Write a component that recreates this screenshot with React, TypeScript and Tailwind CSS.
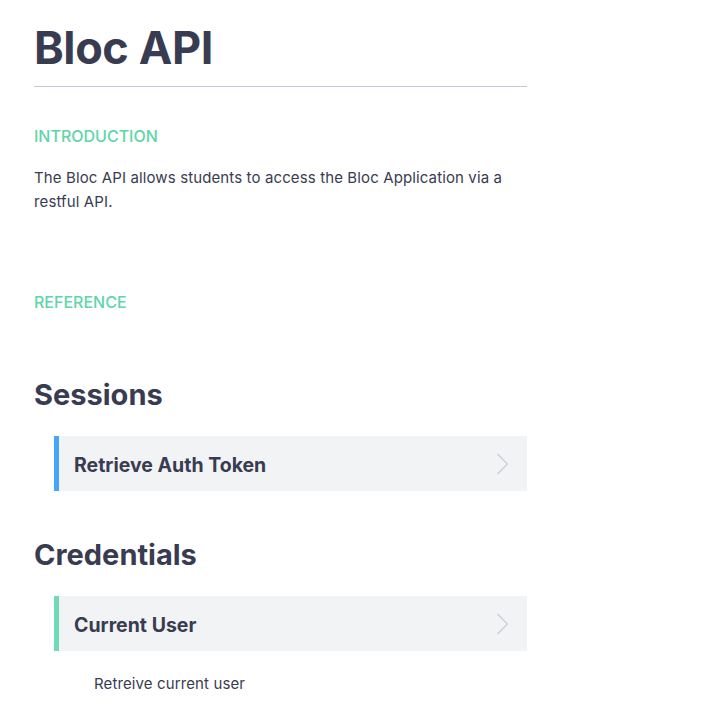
import { ReactNode } from "react";

const Chevron = () => (
  <svg width="12" height="22" viewBox="0 0 12 22" fill="none" className="shrink-0">
    <path d="M1.5 1l10 10-10 10" stroke="#c9cad6" strokeWidth="1.2" />
  </svg>
);

function Endpoint({
  title,
  accent,
  children,
}: {
  title: string;
  accent: string;
  children?: ReactNode;
}) {
  return (
    <div className="ml-5">
      <div
        className={`flex h-[55px] items-center justify-between border-l-[5px] ${accent} bg-[#f2f3f5] pl-[15px] pr-[19px]`}
      >
        <span className="pt-[5px] text-[19.5px] font-bold text-[#393c51]">{title}</span>
        <Chevron />
      </div>
      {children}
    </div>
  );
}

export default function App() {
  return (
    <div
      className="min-h-screen bg-white text-[#393c51]"
      style={{ fontFamily: "Inter, 'Noto Sans', sans-serif" }}
    >
      <main className="ml-[34px] w-[493px] pt-[22px]">
        {/* Header */}
        <h1 className="text-[45px] font-bold leading-[52px] tracking-[-0.4px]">Bloc API</h1>
        <hr className="mt-[12px] border-t border-[#c5c6d8]" />

        {/* Introduction */}
        <h4 className="mt-[39px] text-[16px] font-medium uppercase leading-5 text-[#5ed6a8]">
          Introduction
        </h4>
        <p className="mt-[20px] text-[15px] leading-6 tracking-[0.12px]">
          The Bloc API allows students to access the Bloc Application via a restful API.
        </p>

        <h4 className="mt-[78px] text-[16px] font-medium uppercase leading-5 text-[#5ed6a8]">
          Reference
        </h4>

        {/* Sessions */}
        <h2 className="mt-[65px] text-[29px] font-bold leading-9">Sessions</h2>
        <div className="mt-[23px]">
          <Endpoint title="Retrieve Auth Token" accent="border-[#45a5fb]" />
        </div>

        {/* Credentials */}
        <h2 className="mt-[46px] text-[29px] font-bold leading-9">Credentials</h2>
        <div className="mt-[23px]">
          <Endpoint title="Current User" accent="border-[#6ddcb4]">
            <p className="mt-[21px] pl-10 text-[15px] leading-6 tracking-[0.12px]">
              Retreive current user
            </p>
          </Endpoint>
        </div>
      </main>
    </div>
  );
}
